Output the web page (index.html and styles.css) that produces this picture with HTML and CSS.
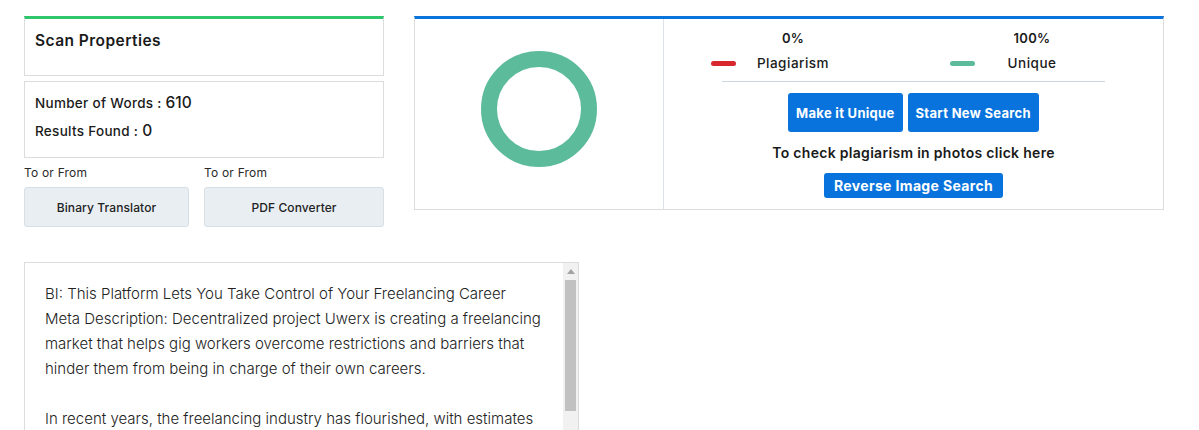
FILE: index.html
```html
<!DOCTYPE html>
<html lang="en">
<head>
<meta charset="utf-8">
<title>Plagiarism Checker Result</title>
<link rel="stylesheet" href="styles.css">
</head>
<body>
<div class="page">
  <div class="top">
    <div class="left-col">
      <div class="card card-title">
        <h2 class="scan-title">Scan Properties</h2>
      </div>
      <div class="card card-stats">
        <p class="stat">Number of Words : <span class="num">610</span></p>
        <p class="stat">Results Found : <span class="num">0</span></p>
      </div>
      <div class="tools">
        <div class="tool tool-a">
          <span class="tool-label">To or From</span>
          <a class="tool-btn" href="#">Binary Translator</a>
        </div>
        <div class="tool tool-b">
          <span class="tool-label">To or From</span>
          <a class="tool-btn" href="#">PDF Converter</a>
        </div>
      </div>
    </div>
    <div class="result-card">
      <div class="chart-pane">
        <svg class="donut" width="116" height="116" viewBox="0 0 116 116">
          <circle cx="58" cy="58" r="50" fill="none" stroke="#5bbb9b" stroke-width="16"/>
        </svg>
      </div>
      <div class="info-pane">
        <div class="legend">
          <div class="legend-item">
            <span class="bar bar-red"></span>
            <div class="legend-text">
              <span class="pct">0%</span>
              <span class="lbl">Plagiarism</span>
            </div>
          </div>
          <div class="legend-item">
            <span class="bar bar-green"></span>
            <div class="legend-text">
              <span class="pct">100%</span>
              <span class="lbl">Unique</span>
            </div>
          </div>
        </div>
        <div class="divider"></div>
        <div class="actions">
          <a class="btn btn-big" href="#">Make it Unique</a>
          <a class="btn btn-big" href="#">Start New Search</a>
        </div>
        <p class="photo-note">To check plagiarism in photos click here</p>
        <a class="btn btn-small" href="#">Reverse Image Search</a>
      </div>
    </div>
  </div>
  <div class="editor">
    <textarea class="content" spellcheck="false">BI: This Platform Lets You Take Control of Your Freelancing Career
Meta Description: Decentralized project Uwerx is creating a freelancing market that helps gig workers overcome restrictions and barriers that hinder them from being in charge of their own careers.

In recent years, the freelancing industry has flourished, with estimates suggesting that the number of people working as freelancers will keep growing over the coming decade. However, freelancers still face many obstacles, from high platform fees to delayed payments and limited control over their own profiles and reputations.

Uwerx aims to change that by building a decentralized marketplace where workers and clients connect directly, payments are handled transparently, and reputation belongs to the people who earned it.</textarea>
    <div class="scrollbar" aria-hidden="true">
      <div class="scroll-arrow">
        <svg width="8" height="5" viewBox="0 0 8 5"><path d="M0 5 L4 0 L8 5 Z" fill="#a3a3a3"/></svg>
      </div>
      <div class="scroll-thumb"></div>
    </div>
  </div>
</div>
</body>
</html>
```

FILE: styles.css
```css
* {
  box-sizing: border-box;
}

html, body {
  margin: 0;
  padding: 0;
  background: #ffffff;
}

body {
  font-family: "Inter", "Noto Sans", "Liberation Sans", sans-serif;
  color: #1c1c1c;
}

.page {
  padding: 16px 24px 0 24px;
}

.top {
  display: flex;
  align-items: flex-start;
  gap: 30px;
}

.left-col {
  width: 360px;
  display: flex;
  flex-direction: column;
}

.card {
  border: 1px solid #dcdcdc;
  background: #fff;
}

.card-title {
  height: 60px;
  border-top: 3px solid #2fc66e;
  padding: 11px 10px 0;
}

.scan-title {
  margin: 0;
  font-size: 15.5px;
  line-height: 22px;
  font-weight: 600;
  letter-spacing: 0.45px;
  color: #1a1a1a;
}

.card-stats {
  height: 77px;
  margin-top: 5px;
  padding: 7px 10px 0;
}

.stat {
  margin: 0;
  font-size: 13.5px;
  line-height: 28px;
  font-weight: 500;
  letter-spacing: 0.3px;
  color: #1a1a1a;
}

.num {
  font-size: 15.5px;
  font-weight: 500;
  letter-spacing: 0;
}

.tools {
  display: flex;
  gap: 15px;
  margin-top: 6px;
}

.tool {
  display: flex;
  flex-direction: column;
}

.tool-a {
  width: 165px;
}

.tool-b {
  width: 180px;
}

.tool-label {
  font-size: 12px;
  line-height: 18px;
  letter-spacing: 0.2px;
  color: #2a2a2a;
}

.tool-btn {
  margin-top: 5px;
  height: 40px;
  display: flex;
  align-items: center;
  justify-content: center;
  background: #e9eef3;
  border: 1px solid #d6dee6;
  border-radius: 3px;
  font-size: 12px;
  font-weight: 500;
  letter-spacing: 0.1px;
  color: #222;
  text-decoration: none;
}

.result-card {
  width: 750px;
  height: 194px;
  display: flex;
  border: 1px solid #dcdcdc;
  border-top: 3px solid #0a74da;
}

.chart-pane {
  width: 249px;
  border-right: 1px solid #dde2ea;
  display: flex;
  justify-content: center;
  padding-top: 32px;
}

.donut {
  display: block;
}

.info-pane {
  flex: 1;
  display: flex;
  flex-direction: column;
  align-items: center;
}

.legend {
  align-self: flex-start;
  margin-left: 47px;
  display: flex;
  gap: 119px;
  padding-top: 8px;
}

.legend-item {
  display: flex;
  align-items: flex-end;
  gap: 19px;
}

.bar {
  width: 25px;
  height: 5px;
  border-radius: 3px;
  margin-bottom: 7px;
}

.bar-red {
  background: #d9272e;
}

.bar-green {
  background: #5bbb9b;
}

.legend-text {
  width: 76px;
  display: flex;
  flex-direction: column;
  align-items: center;
}

.pct {
  font-size: 13px;
  line-height: 22px;
  font-weight: 600;
  letter-spacing: 0.3px;
  color: #1a1a1a;
}

.lbl {
  margin-top: 4px;
  font-size: 13.5px;
  line-height: 20px;
  font-weight: 500;
  letter-spacing: 0.5px;
  color: #1a1a1a;
}

.divider {
  width: 383px;
  height: 1px;
  background: #ccd6e2;
  margin-top: 8px;
}

.actions {
  display: flex;
  gap: 5px;
  margin-top: 11px;
}

.btn {
  background: #0873dc;
  color: #fff;
  text-decoration: none;
  font-weight: 700;
  border-radius: 3px;
  display: flex;
  align-items: center;
  justify-content: center;
}

.btn-big {
  height: 39px;
  padding: 0 8px;
  font-size: 13px;
  letter-spacing: 0.3px;
}

.photo-note {
  margin: 12px 0 0;
  font-size: 14px;
  line-height: 18px;
  font-weight: 600;
  letter-spacing: 0.3px;
  color: #1a1a1a;
}

.btn-small {
  margin-top: 11px;
  height: 25px;
  padding: 0 10px;
  font-size: 14px;
  letter-spacing: 0.35px;
}

.editor {
  margin-top: 35px;
  width: 555px;
  height: 420px;
  border: 1px solid #dcdcdc;
  display: flex;
}

.content {
  flex: 1;
  display: block;
  border: none;
  margin: 0;
  padding: 18px 16px 10px 20px;
  font-family: "Inter", "Noto Sans", "Liberation Sans", sans-serif;
  font-size: 15px;
  line-height: 25px;
  font-weight: 300;
  color: #222;
  resize: none;
  overflow: hidden;
  outline: none;
  background: #fff;
}

.scrollbar {
  width: 15px;
  background: #f1f1f1;
  display: flex;
  flex-direction: column;
  align-items: stretch;
}

.scroll-arrow {
  height: 17px;
  display: flex;
  align-items: center;
  justify-content: center;
}

.scroll-arrow svg {
  display: block;
}

.scroll-thumb {
  height: 131px;
  margin: 0 2px;
  background: #c1c1c1;
}
```
